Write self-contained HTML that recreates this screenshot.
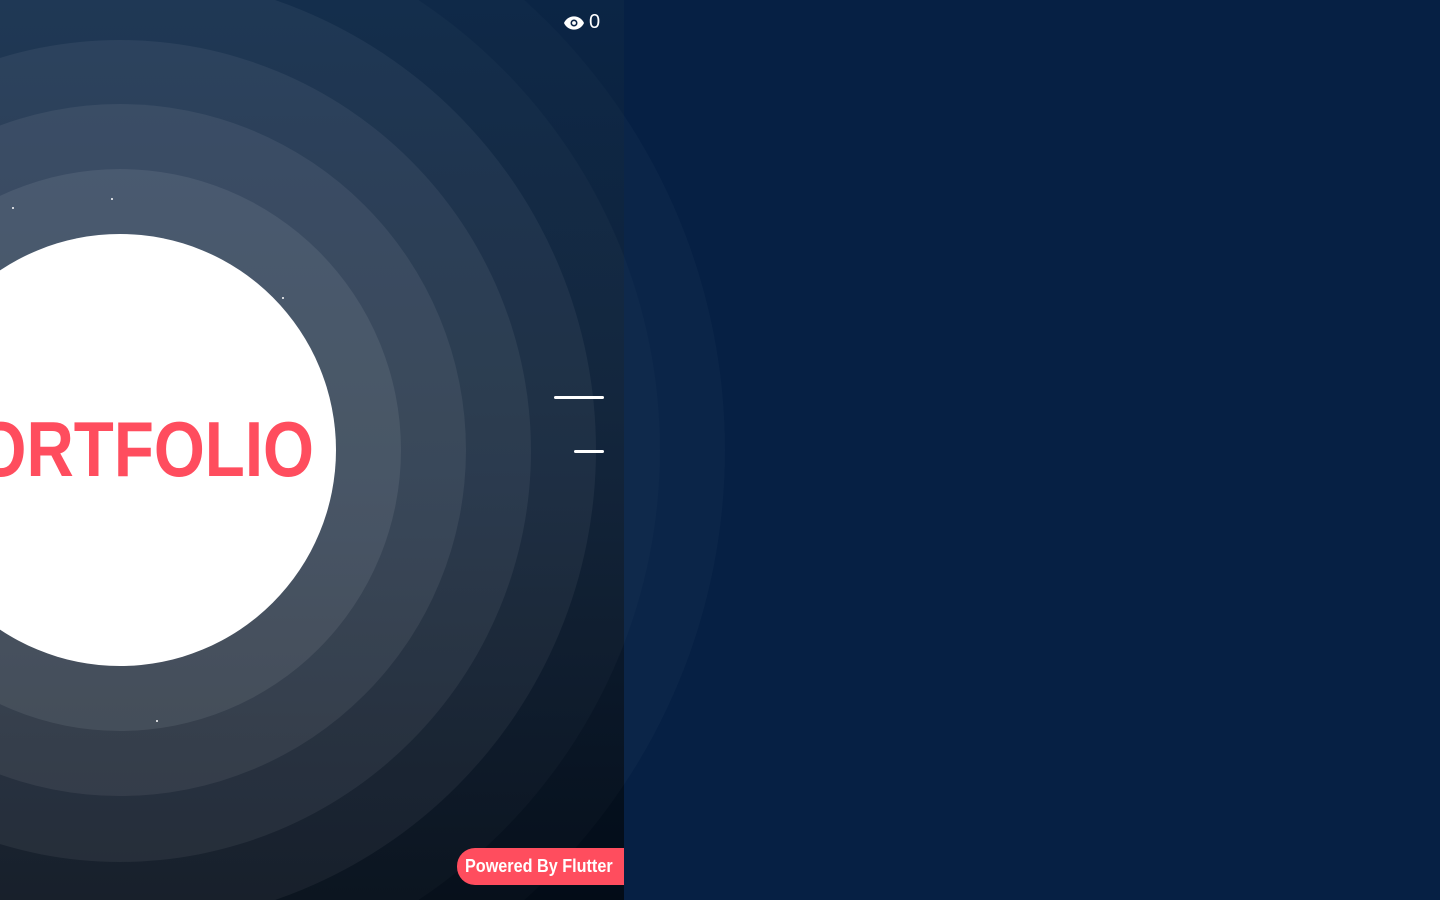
<!DOCTYPE html>
<html><head><meta charset="utf-8"><style>
html,body{margin:0;padding:0;width:1440px;height:900px;overflow:hidden;background:#062044;font-family:"Liberation Sans",sans-serif}
#left{position:absolute;left:0;top:0;width:624px;height:900px;background:linear-gradient(180deg,#0b2545 0%,#0a1d36 45%,#030c17 100%);overflow:hidden}
.r{position:absolute;border-radius:50%;background:rgba(255,255,255,0.05)}
.dot{position:absolute;width:2px;height:2px;background:#fff;border-radius:50%}
</style></head><body>
<div style="position:absolute;left:0;top:0;width:1440px;height:900px;overflow:hidden">
<div class="r" style="left:-485px;top:-155px;width:1210px;height:1210px;background:rgba(255,255,255,0.025)"></div>
<div class="r" style="left:-420px;top:-90px;width:1080px;height:1080px;background:rgba(255,255,255,0.02)"></div>
</div>
<div id="left">
<div class="r" style="left:-485px;top:-155px;width:1210px;height:1210px;background:rgba(255,255,255,0.02)"></div>
<div class="r" style="left:-420px;top:-90px;width:1080px;height:1080px;background:rgba(255,255,255,0.025)"></div>
<div class="r" style="left:-356px;top:-26px;width:952px;height:952px;background:rgba(255,255,255,0.05)"></div>
<div class="r" style="left:-291px;top:40px;width:822px;height:822px;background:rgba(255,255,255,0.06)"></div>
<div class="r" style="left:-226px;top:104px;width:692px;height:692px;background:rgba(255,255,255,0.065)"></div>
<div class="r" style="left:-161px;top:169px;width:562px;height:562px;background:rgba(255,255,255,0.08)"></div>
<div class="r" style="left:-96px;top:234px;width:432px;height:432px;background:#fff"></div>
<div style="position:absolute;right:310px;top:404px;font-size:78px;font-weight:bold;color:#ff4d5e;line-height:90px;white-space:nowrap;transform:scaleX(0.84);transform-origin:right center;width:0;direction:rtl;"><span style="direction:ltr;unicode-bidi:bidi-override">PORTFOLIO</span></div>
<div class="dot" style="left:12px;top:207px"></div>
<div class="dot" style="left:111px;top:198px"></div>
<div class="dot" style="left:282px;top:297px"></div>
<div class="dot" style="left:156px;top:720px"></div>
<div style="position:absolute;left:554px;top:396px;width:50px;height:3px;background:#fff;border-radius:2px"></div>
<div style="position:absolute;left:574px;top:450px;width:30px;height:3px;background:#fff;border-radius:2px"></div>
<div style="position:absolute;left:564px;top:11px;color:#fff;font-size:20px;display:flex;align-items:center;gap:5px">
<svg width="20" height="14" viewBox="0 0 24 16"><path d="M12 0C6.5 0 2 3.5 0 8c2 4.5 6.5 8 12 8s10-3.5 12-8C22 3.5 17.5 0 12 0z" fill="#fff"/><circle cx="12" cy="8" r="4.2" fill="#0a2345"/><circle cx="12" cy="8" r="2.3" fill="#fff"/></svg><span>0</span></div>
<div style="position:absolute;left:457px;top:848px;width:167px;height:37px;background:#ff4d5e;border-radius:18px 0 0 18px;"></div>
<div style="position:absolute;left:465px;top:848px;color:#fff;font-weight:bold;font-size:18px;line-height:37px;white-space:nowrap;transform:scaleX(0.9);transform-origin:left center">Powered By Flutter</div>
</div>
</body></html>
